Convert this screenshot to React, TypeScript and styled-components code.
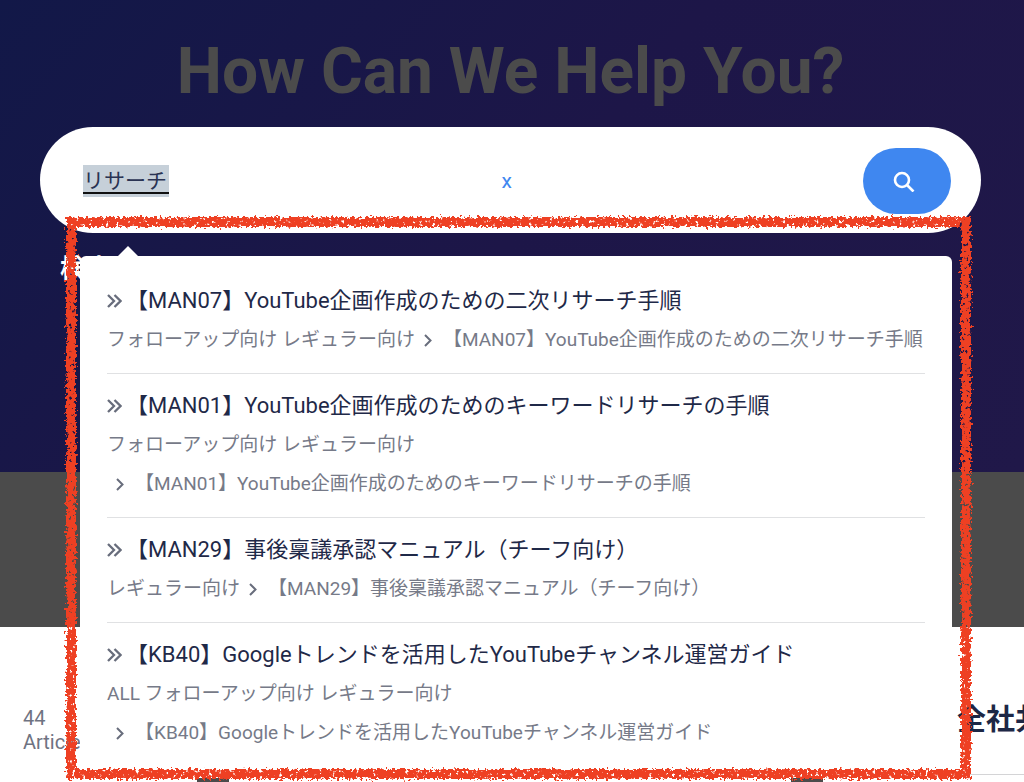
import React from "react";
import styled, { createGlobalStyle } from "styled-components";

const Global = createGlobalStyle`
  *, *::before, *::after { box-sizing: border-box; }
  body { margin: 0; background: #fff; font-family: Roboto, "Noto Sans CJK JP", sans-serif; color: #1d2745; }
  h1, h2, p, ul { margin: 0; padding: 0; }
`;

const Page = styled.div`
  position: relative;
  min-height: 100vh;
  overflow: hidden;
`;

const Hero = styled.header`
  height: 472px;
  padding: 34px 43px 0 40px;
  background: linear-gradient(130deg, #121848 0%, #1d1648 50%, #201849 100%);
`;

const Headline = styled.h1`
  font-size: 64px;
  line-height: 76px;
  font-weight: 700;
  text-align: center;
  color: #4b4b4b;
`;

const SearchArea = styled.div`
  position: relative;
  margin-top: 17px;
`;

const SearchForm = styled.form`
  display: flex;
  align-items: center;
  height: 106px;
  padding: 2px 30px 0 43px;
  border-radius: 53px;
  background: #fff;
`;

const FieldWrap = styled.div`
  flex: 1;
  display: flex;
`;

const SearchInput = styled.input`
  width: 86px;
  height: 32px;
  padding: 0;
  border: 0;
  outline: 0;
  font: 400 21px/32px Roboto, "Noto Sans CJK JP", sans-serif;
  color: #2a3353;
  background: linear-gradient(#111, #111) 0 27px / 100% 2px no-repeat, #c6d0d9;
`;

const ClearButton = styled.button`
  margin-right: 345px;
  padding: 6px;
  border: 0;
  background: none;
  font: 400 21px/24px Roboto, sans-serif;
  color: #3f87f0;
`;

const SearchButton = styled.button`
  display: grid;
  place-items: center;
  width: 88px;
  height: 66px;
  padding: 0 6px 0 0;
  border: 0;
  border-radius: 33px;
  background: #3f87f0;
`;

const PopularLabel = styled.p`
  padding: 17px 0 0 20px;
  font-size: 26px;
  line-height: 38px;
  font-weight: 700;
  color: #fff;
`;

const Suggestions = styled.ul`
  position: absolute;
  top: 129px;
  left: 40px;
  right: 29px;
  padding: 13px 27px 4px;
  list-style: none;
  border-radius: 6px;
  background: #fff;

  &::before {
    content: "";
    position: absolute;
    top: -10px;
    left: 38px;
    border: 10px solid transparent;
    border-top: 0;
    border-bottom-color: #fff;
  }
`;

const Suggestion = styled.li`
  padding: 12px 0 14px;

  & + & {
    border-top: 1px solid #e0e1e3;
  }
`;

const SuggestionTitle = styled.a`
  display: flex;
  align-items: center;
  gap: 4px;
  font-size: 22px;
  line-height: 39px;
  white-space: nowrap;
  color: #1f2948;
  text-decoration: none;
`;

const Trail = styled.div`
  display: flex;
  flex-wrap: wrap;
  font-size: 19px;
  line-height: 39px;
  color: #767a88;
`;

const Crumb = styled.span`
  display: flex;
  align-items: center;
  gap: 8px;
  padding-left: 6px;
  white-space: nowrap;
`;

const Band = styled.div`
  height: 155px;
  background: #4b4b4b;
`;

const Categories = styled.main`
  display: grid;
  grid-template-columns: 934px 1fr;
  padding-left: 23px;
`;

const ArticleCount = styled.p`
  padding-top: 79px;
  width: 90px;
  font-size: 20px;
  line-height: 24px;
  color: #6f7382;
`;

const CategoryTitle = styled.h2`
  height: 148px;
  padding-top: 72px;
  border-bottom: 1px solid #d4d4d6;
  font-size: 29px;
  line-height: 42px;
  font-weight: 700;
  white-space: nowrap;
  overflow: hidden;
`;

const TileRow = styled.div`
  display: flex;
  gap: 562px;
  padding: 3px 0 0 197px;
`;

const Tile = styled.span`
  flex: none;
  width: 32px;
  height: 4px;
  background: #4b4b4b;
`;

const Annotation = styled.div`
  position: absolute;
  top: 90px;
  left: 26px;
  right: 10px;
  height: 562px;
  border: 10px solid #ee4023;
  filter: url(#crayon);
  pointer-events: none;
`;

const results = [
  {
    title: "【MAN07】YouTube企画作成のための二次リサーチ手順",
    groups: "フォローアップ向け レギュラー向け",
  },
  {
    title: "【MAN01】YouTube企画作成のためのキーワードリサーチの手順",
    groups: "フォローアップ向け レギュラー向け",
  },
  {
    title: "【MAN29】事後稟議承認マニュアル（チーフ向け）",
    groups: "レギュラー向け",
  },
  {
    title: "【KB40】Googleトレンドを活用したYouTubeチャンネル運営ガイド",
    groups: "ALL フォローアップ向け レギュラー向け",
  },
];

const DoubleChevron = () => (
  <svg width="15" height="16" viewBox="0 0 15 16" fill="none" stroke="#686d7c" strokeWidth="2.3">
    <path d="M1 2l6 6-6 6M7.500 2l6 6-6 6" />
  </svg>
);

const Chevron = () => (
  <svg width="14" height="16" viewBox="0 0 14 16" fill="none" stroke="#686d7c" strokeWidth="2">
    <path d="M4 3l5.500 5.500-5.500 5.500" />
  </svg>
);

const SearchIcon = () => (
  <svg width="22" height="22" viewBox="0 0 22 22" fill="none" stroke="#fff" strokeWidth="2.6">
    <circle cx="9" cy="10" r="7" />
    <path d="M14 15l6.500 6.500" />
  </svg>
);

/* Rough, speckled edge for the hand-drawn marker frame. */
const CrayonFilter = () => (
  <svg width="0" height="0" aria-hidden="true">
    <filter id="crayon" x="-2%" y="-2%" width="104%" height="104%" colorInterpolationFilters="sRGB">
      <feTurbulence type="fractalNoise" baseFrequency="0.35" numOctaves="2" seed="4" result="grain" />
      <feDisplacementMap in="SourceGraphic" in2="grain" scale="8" xChannelSelector="R" yChannelSelector="G" result="rough" />
      <feTurbulence type="fractalNoise" baseFrequency="0.3" numOctaves="2" seed="9" result="speck" />
      <feColorMatrix in="speck" type="matrix" values="0 0 0 0 0  0 0 0 0 0  0 0 0 0 0  0 0 0 9 -5.7" result="holes" />
      <feComposite in="rough" in2="holes" operator="out" />
    </filter>
  </svg>
);

export default function App() {
  return (
    <Page>
      <Global />
      <Hero>
        <Headline>How Can We Help You?</Headline>
        <SearchArea>
          <SearchForm>
            <FieldWrap>
              <SearchInput type="text" aria-label="検索" defaultValue="リサーチ" />
            </FieldWrap>
            <ClearButton type="button">x</ClearButton>
            <SearchButton type="button" aria-label="検索する">
              <SearchIcon />
            </SearchButton>
          </SearchForm>
          <PopularLabel>検索</PopularLabel>
          <Suggestions>
            {results.map(({ title, groups }) => (
              <Suggestion key={title}>
                <SuggestionTitle href="#">
                  <DoubleChevron />
                  {title}
                </SuggestionTitle>
                <Trail>
                  <span>{groups}</span>
                  <Crumb>
                    <Chevron />
                    {title}
                  </Crumb>
                </Trail>
              </Suggestion>
            ))}
          </Suggestions>
          <Annotation />
        </SearchArea>
      </Hero>
      <Band />
      <Categories>
        <ArticleCount>44 <br />Articles</ArticleCount>
        <CategoryTitle>全社共</CategoryTitle>
      </Categories>
      <TileRow>
        <Tile />
        <Tile />
      </TileRow>
      <CrayonFilter />
    </Page>
  );
}
